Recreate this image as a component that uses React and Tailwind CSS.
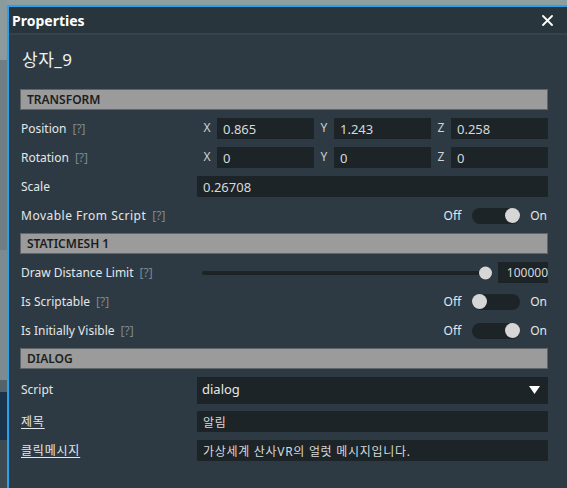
import React from "react";

const FONT = { fontFamily: '"Noto Sans", "Noto Sans CJK KR", sans-serif' };

function Help() {
  return <span className="ml-[6px] text-[#7f888e]">[?]</span>;
}

function Label({ children, help, underline }) {
  return (
    <div className="w-[176px] shrink-0 text-[12px] text-[#e4e7e9] whitespace-nowrap">
      <span className={underline ? "underline underline-offset-2 tracking-[0.8px]" : ""}>{children}</span>
      {help && <Help />}
    </div>
  );
}

function Row({ children, h = "h-[29px]" }) {
  return <div className={`flex items-center ${h}`}>{children}</div>;
}

function Input({ value, className = "" }) {
  return (
    <div
      className={`h-[21px] bg-[#1d2428] flex items-center pt-[3px] pl-[6px] text-[#d6d9db] whitespace-nowrap overflow-hidden ${className}`}
    >
      {value}
    </div>
  );
}

function XYZ({ vals }) {
  const labels = ["X", "Y", "Z"];
  return (
    <div className="flex w-[351px]">
      {vals.map((v, i) => (
        <div key={i} className="flex items-center">
          <div className="w-[20px] text-center text-[12px] text-[#cfd3d6] -mt-[2px]">{labels[i]}</div>
          <Input value={v} className="w-[97px] text-[13px]" />
        </div>
      ))}
    </div>
  );
}

function Toggle({ on }) {
  return (
    <div className="flex-1 flex items-center justify-end pr-[1px] text-[12px] text-[#e4e7e9]">
      <span>Off</span>
      <div
        className={`ml-[11px] w-[48px] h-[16px] rounded-full bg-[#1d2428] flex items-center ${
          on ? "justify-end" : "justify-start"
        }`}
      >
        <div className="w-[15px] h-[15px] rounded-full bg-[#d6d6d6]" />
      </div>
      <span className="ml-[10px]">On</span>
    </div>
  );
}

function Section({ title }) {
  return (
    <div className="h-[21px] bg-[#9b9b9b] border border-[#5f676b] flex items-center pl-[6px] text-[12px] font-semibold text-[#1b1e20]">
      {title}
    </div>
  );
}

export default function App() {
  return (
    <div className="w-[567px] h-[488px] bg-[#8c9c9f] flex overflow-hidden" style={FONT}>
      {/* left background strip */}
      <div className="w-[7px] shrink-0 flex flex-col">
        <div className="h-[60px] bg-[#8a9a9d]" />
        <div className="h-[190px] bg-[#6f7e83]" />
        <div className="h-[130px] bg-[#7c8b8f]" />
        <div className="h-[12px] bg-[#55626a]" />
        <div className="h-[48px] bg-[#1c3449]" />
        <div className="h-[48px] bg-[#3e4a52]" />
      </div>
      <div className="flex-1 flex flex-col">
        <div className="h-[5px] bg-[#8e9fa2]" />
        <div className="flex-1 border-t-2 border-l-2 border-[#2e9fe8] bg-[#2d3a43] flex flex-col">
          {/* header */}
          <div className="h-[26px] bg-[#28353d] flex items-center justify-between pl-[3px] pr-[14px]">
            <span className="text-[14px] font-bold text-white">Properties</span>
            <svg width="11" height="11" viewBox="0 0 11 11">
              <path d="M1 1 L10 10 M10 1 L1 10" stroke="#ffffff" strokeWidth="1.8" strokeLinecap="round" />
            </svg>
          </div>
          <div className="h-[2px] bg-[#34434c]" />
          {/* body */}
          <div className="pl-[11px] pr-[19px] pt-[13px] flex flex-col">
            <div className="h-[24px] flex items-center pl-[2px] text-[17px] text-[#eef0f1] tracking-[0.5px]">상자_9</div>
            <div className="mt-[17px]">
              <Section title="TRANSFORM" />
            </div>
            <div className="pt-[4px] pb-[3px] pl-[1px] flex flex-col">
              <Row>
                <Label help>Position</Label>
                <XYZ vals={["0.865", "1.243", "0.258"]} />
              </Row>
              <Row>
                <Label help>Rotation</Label>
                <XYZ vals={["0", "0", "0"]} />
              </Row>
              <Row>
                <Label>Scale</Label>
                <Input value="0.26708" className="flex-1 text-[13px]" />
              </Row>
              <Row>
                <Label help>
                  <span className="tracking-[0.5px]">Movable From Script</span>
                </Label>
                <Toggle on />
              </Row>
            </div>
            <Section title="STATICMESH 1" />
            <div className="pt-[4px] pb-[3px] pl-[1px] flex flex-col">
              <Row>
                <Label help>Draw Distance Limit</Label>
                <div className="flex-1 flex items-center pl-[5px]">
                  <div className="flex-1 relative h-[4px] bg-[#1d2428] rounded-full">
                    <div className="absolute right-0 top-1/2 -translate-y-1/2 w-[13px] h-[13px] rounded-full bg-[#d6d6d6]" />
                  </div>
                  <div className="ml-[6px] w-[50px] h-[21px] bg-[#1d2428] flex items-center justify-end text-[12px] text-[#d6d9db]">
                    100000
                  </div>
                </div>
              </Row>
              <Row>
                <Label help>Is Scriptable</Label>
                <Toggle on={false} />
              </Row>
              <Row>
                <Label help>Is Initially Visible</Label>
                <Toggle on />
              </Row>
            </div>
            <Section title="DIALOG" />
            <div className="pt-[4px] pl-[1px] flex flex-col">
              <Row h="h-[34px]">
                <Label>Script</Label>
                <div className="flex-1 h-[27px] bg-[#1d2428] flex items-center justify-between pl-[5px] pr-[8px] text-[13px] text-[#e4e7e9]">
                  <span>dialog</span>
                  <svg width="11" height="8" viewBox="0 0 11 8">
                    <path d="M0 0 L11 0 L5.5 8 Z" fill="#ffffff" />
                  </svg>
                </div>
              </Row>
              <Row>
                <Label underline>제목</Label>
                <Input value="알림" className="flex-1 text-[12px] tracking-[0.8px]" />
              </Row>
              <Row>
                <Label underline>클릭메시지</Label>
                <Input value="가상세계 산사VR의 얼럿 메시지입니다." className="flex-1 text-[12px] tracking-[0.7px]" />
              </Row>
            </div>
          </div>
        </div>
      </div>
    </div>
  );
}
